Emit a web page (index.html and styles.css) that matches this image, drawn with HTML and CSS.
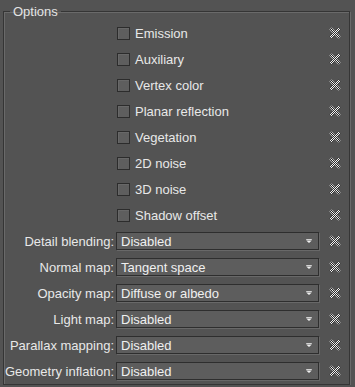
FILE: index.html
```html
<!DOCTYPE html>
<html lang="en">

<head>
  <meta charset="UTF-8">
  <title>Options</title>
  <link rel="stylesheet" href="styles.css">
</head>

<body>
  <svg width="0" height="0" class="defs">
    <defs>
      <pattern id="checker" width="2" height="2" patternUnits="userSpaceOnUse">
        <rect width="2" height="2" fill="#2a2a2a" />
        <rect width="1" height="1" fill="#f2f2f2" />
        <rect x="1" y="1" width="1" height="1" fill="#f2f2f2" />
      </pattern>
      <symbol id="clear" viewBox="0 0 12 12">
        <path d="M1.5 1.5 L10.5 10.5 M10.5 1.5 L1.5 10.5" stroke="url(#checker)" stroke-width="3" fill="none" />
      </symbol>
      <symbol id="arrow" viewBox="0 0 7 5">
        <rect x="0" y="0" width="7" height="1" fill="#f0f0f0" />
        <path d="M0 2 H7 L3.5 5 Z" fill="#f0f0f0" />
      </symbol>
    </defs>
  </svg>

  <fieldset class="options">
    <legend>Options</legend>
    <div class="grid">
      <span></span><label class="check"><span class="box"></span>Emission</label><svg class="x"><use href="#clear" /></svg>
      <span></span><label class="check"><span class="box"></span>Auxiliary</label><svg class="x"><use href="#clear" /></svg>
      <span></span><label class="check"><span class="box"></span>Vertex color</label><svg class="x"><use href="#clear" /></svg>
      <span></span><label class="check"><span class="box"></span>Planar reflection</label><svg class="x"><use href="#clear" /></svg>
      <span></span><label class="check"><span class="box"></span>Vegetation</label><svg class="x"><use href="#clear" /></svg>
      <span></span><label class="check"><span class="box"></span>2D noise</label><svg class="x"><use href="#clear" /></svg>
      <span></span><label class="check"><span class="box"></span>3D noise</label><svg class="x"><use href="#clear" /></svg>
      <span></span><label class="check"><span class="box"></span>Shadow offset</label><svg class="x"><use href="#clear" /></svg>

      <span class="name">Detail blending:</span>
      <div class="select">Disabled<svg class="arrow"><use href="#arrow" /></svg></div>
      <svg class="x"><use href="#clear" /></svg>

      <span class="name">Normal map:</span>
      <div class="select">Tangent space<svg class="arrow"><use href="#arrow" /></svg></div>
      <svg class="x"><use href="#clear" /></svg>

      <span class="name">Opacity map:</span>
      <div class="select">Diffuse or albedo<svg class="arrow"><use href="#arrow" /></svg></div>
      <svg class="x"><use href="#clear" /></svg>

      <span class="name">Light map:</span>
      <div class="select">Disabled<svg class="arrow"><use href="#arrow" /></svg></div>
      <svg class="x"><use href="#clear" /></svg>

      <span class="name">Parallax mapping:</span>
      <div class="select">Disabled<svg class="arrow"><use href="#arrow" /></svg></div>
      <svg class="x"><use href="#clear" /></svg>

      <span class="name">Geometry inflation:</span>
      <div class="select">Disabled<svg class="arrow"><use href="#arrow" /></svg></div>
      <svg class="x"><use href="#clear" /></svg>
    </div>
  </fieldset>
</body>

</html>
```

FILE: styles.css
```css
body {
  margin: 0;
  padding: 4px 0 0 3px;
  background-color: #535353;
  font-family: "Liberation Sans", Arial, sans-serif;
  font-size: 13px;
  color: #e8e8e8;
}

.defs {
  position: absolute;
}

.options {
  width: 345px;
  margin: 0;
  padding: 1px 0 0 0;
  border: 1px solid #353535;
  box-shadow: 1px 1px 0 #6a6a6a, inset 1px 1px 0 #6a6a6a;
}

.options legend {
  margin-left: 6px;
  padding: 0 3px;
  line-height: 15px;
  color: #e4e4e4;
}

.grid {
  display: grid;
  grid-template-columns: 110px 203px 1fr;
  column-gap: 2px;
  grid-auto-rows: 26px;
  align-items: center;
}

.name {
  text-align: right;
  white-space: nowrap;
}

.check {
  display: flex;
  align-items: center;
  gap: 5px;
  padding-left: 1px;
}

.box {
  width: 11px;
  height: 11px;
  border: 1px solid #2c2c2c;
  background-color: #5e5e5e;
  box-shadow: inset 1px 1px 0 #686868;
}

.select {
  height: 16px;
  display: flex;
  align-items: center;
  justify-content: space-between;
  padding: 0 6px 0 4px;
  border: 1px solid #2e2e2e;
  background-color: #5d5d5d;
  box-shadow: 1px 1px 0 #686868;
  color: #f0f0f0;
}

.arrow {
  width: 6px;
  height: 4px;
}

.x {
  width: 12px;
  height: 12px;
  justify-self: center;
  margin-right: 1px;
}
```
